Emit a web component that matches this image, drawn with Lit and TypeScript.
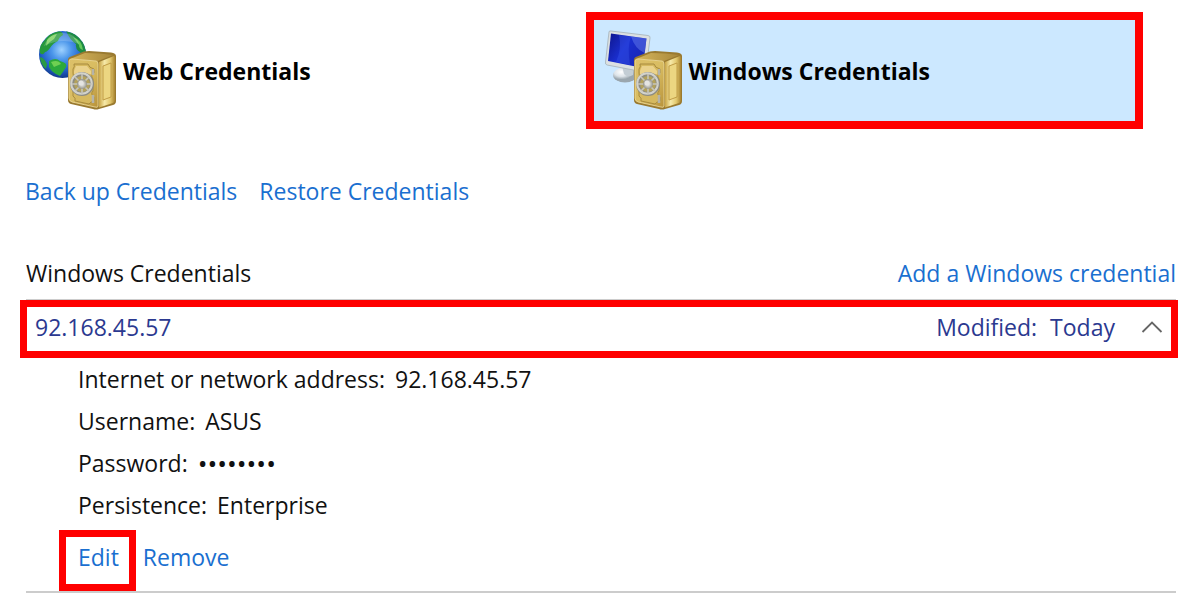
import { LitElement, html, css, svg } from "lit";
import { customElement, state } from "lit/decorators.js";

const safe = svg`
  <defs>
    <linearGradient id="front" x1="0" y1="0" x2="1" y2="1">
      <stop offset="0" stop-color="#dcc069" /><stop offset=".5" stop-color="#d9bd62" /><stop offset="1" stop-color="#b8923a" />
    </linearGradient>
    <linearGradient id="side" x1="0" y1="0" x2="1" y2="0">
      <stop offset="0" stop-color="#c9a545" /><stop offset=".35" stop-color="#f6e9a8" /><stop offset=".7" stop-color="#e3c96f" /><stop offset="1" stop-color="#a98430" />
    </linearGradient>
    <linearGradient id="top" x1="0" y1="0" x2="1" y2="0">
      <stop offset="0" stop-color="#d6b65c" /><stop offset="1" stop-color="#a8873a" />
    </linearGradient>
    <radialGradient id="dial">
      <stop offset="0" stop-color="#f4f4f4" /><stop offset=".5" stop-color="#c9c9c3" /><stop offset="1" stop-color="#94948c" />
    </radialGradient>
  </defs>
  <path d="M29 31 Q29 28 32 27.500L45 22.500Q47 22 50 22L72 23.500Q77 24 77 27V72Q77 75 74 76L60 80Q57 81 54 80L32 75Q29 74 29 71Z" fill="#9a7a30" />
  <path d="M31 30 46 24Q61 24 74 26L59 32Z" fill="url(#top)" />
  <path d="M30 32Q30 30 33 30L57 32Q59 32 59 35V77Q59 79 56 78L33 73Q30 72 30 69Z" fill="url(#front)" stroke="#efdda0" stroke-width=".8" />
  <path d="M60 33 75 27Q76 27 76 29V71Q76 73 74 74L60 78.500Z" fill="url(#side)" />
  <path d="M64 37 72 34V68L64 71Z" fill="#ecd681" stroke="#c09c45" stroke-width="1" />
  <path d="M35 35H49Q50 39 55 40V44Q51 46 54 50V62Q51 65 55 68V72Q51 73 50 75L36 72Q37 69 34 67V61Q36 52 34 44V40Q36 38 35 35Z" fill="#d6b95f" stroke="#a88b3e" stroke-width="1" />
  <path d="M37 37H48L52 42V45H35V42Z" fill="#ead28b" />
  <path d="M54 40v6M54 66v8" stroke="#b5b3a9" stroke-width="2.500" />
  <circle cx="43" cy="55" r="10" fill="#b3a25c" stroke="#8d8c83" stroke-width="4" />
  <circle cx="42.500" cy="54.500" r="10.300" fill="none" stroke="#d2d2cb" stroke-width="2" />
  <path d="M43 45v20M33 55h20M36 48l14 14M50 48 36 62" stroke="#c6c5ba" stroke-width="1.600" />
  <circle cx="43" cy="55" r="5" fill="url(#dial)" />
  <circle cx="42" cy="54" r="2.500" fill="#e5e5e2" />`;

const webIcon = html`<svg class="icon" viewBox="0 0 80 84" aria-hidden="true">
  ${svg`
  <defs>
    <radialGradient id="sea" cx=".48" cy=".4" r=".6">
      <stop offset="0" stop-color="#9fd2ff" /><stop offset=".35" stop-color="#4b96ea" /><stop offset=".75" stop-color="#1f5cc6" /><stop offset="1" stop-color="#123a8c" />
    </radialGradient>
    <clipPath id="globe"><circle cx="23.500" cy="25.500" r="23.500" /></clipPath>
  </defs>
  <circle cx="23.500" cy="25.500" r="23.500" fill="url(#sea)" />
  <g clip-path="url(#globe)">
    <path d="M5 12Q10 4 20 2Q24 3 24 6Q20 8 19 12Q14 14 11 19Q8 23 6 23Q4 27 1 24L0 17Z" fill="#27993c" />
    <path d="M8 11Q12 6 18 5L15 10Q10 13 7 17Z" fill="#79d15a" />
    <path d="M2 28Q6 30 8 35L7 40Q2 36 1 29Z" fill="#2a9a45" />
    <path d="M10 32Q17 28 21 32Q29 34 27 38Q24 43 21 47Q13 44 10 38Z" fill="#2ca93c" />
    <path d="M12 33Q19 30 22 35L15 38Z" fill="#6fd052" />
    <path d="M27 2Q43 5 47 20V30Q43 28 41 23Q36 20 37 15Q31 11 27 2Z" fill="#1e8c43" />
    <path d="M34 8Q43 11 44 21Q40 20 40 16Z" fill="#63c95a" />
  </g>
  <path d="M5 17Q10 3 25 4Q37 5 40 15Q23 8 5 17Z" fill="#ffffff" opacity=".2" />`}
  ${safe}
</svg>`;

const windowsIcon = html`<svg class="icon" viewBox="0 0 80 84" aria-hidden="true">
  ${svg`
  <defs>
    <linearGradient id="screen" x1="0" y1="0" x2="1" y2=".6">
      <stop offset="0" stop-color="#0f158c" /><stop offset=".5" stop-color="#1a2fd0" /><stop offset="1" stop-color="#1a27b5" />
    </linearGradient>
    <radialGradient id="stand" cx=".35" cy=".3">
      <stop offset="0" stop-color="#ffffff" /><stop offset=".6" stop-color="#dce3e8" /><stop offset="1" stop-color="#9aa6ae" />
    </radialGradient>
  </defs>
  <ellipse cx="20" cy="46" rx="12" ry="7.500" fill="url(#stand)" />
  <path d="M17 37H29L28 46Q22 49 19 45Z" fill="#c3cdd4" />
  <path d="M4 3Q4 1.500 6 2L43 6.500Q45.500 7 45 9L41 42Q41 43.500 39 43L2 36Q0 35.500 .5 33Z" fill="#dbe0e2" stroke="#a5b1b8" stroke-width=".8" />
  <path d="M6 4.500 41.500 9.500 38 39 3 32Z" fill="url(#screen)" />
  <path d="M14 6 26 7.500Q22 18 25 36L11 33Q17 20 14 6Z" fill="#3656e8" opacity=".4" />
  <path d="M26 7.500 41.500 9.500 39.500 24Q30 20 26 7.500Z" fill="#6a82ef" opacity=".45" />`}
  ${safe}
</svg>`;

@customElement("app-root")
export class AppRoot extends LitElement {
  @state() private open = true;

  static styles = css`
    :host {
      display: block;
      min-height: 100vh;
      box-sizing: border-box;
      padding: 12px 23px 20px 20px;
      background: #fff;
      color: #111;
      font: 23px/32px "Open Sans", "Noto Sans", sans-serif;
    }
    * { box-sizing: border-box; }
    button {
      margin: 0;
      border: 0;
      background: none;
      color: inherit;
      font: inherit;
      text-align: left;
      cursor: pointer;
    }
    a { color: #1a6fd0; text-decoration: none; }
    .vaults {
      display: grid;
      grid-template-columns: 1fr 1fr;
      gap: 8px;
      padding-right: 35px;
    }
    .vault {
      display: flex;
      align-items: center;
      gap: 4px;
      height: 117px;
      padding: 0 11px;
      border: 8px solid transparent;
      color: #000;
      font-weight: 700;
    }
    .vault.selected { border-color: #f00; background: #cce8ff; background-clip: padding-box; }
    .icon { width: 80px; height: 84px; flex: none; }
    .links { display: flex; gap: 22px; margin: 46px 0 50px; padding-left: 5px; }
    .heading { display: flex; justify-content: space-between; padding: 0 2px 10px 6px; }
    h2 { margin: 0; font: inherit; }
    .rule { margin: 0 2px 0 6px; border-top: 1px solid #ccc; }
    .row {
      display: flex;
      align-items: center;
      width: 100%;
      height: 58px;
      padding: 0 8px 4px;
      border: 7px solid #f00;
      color: #2b3990;
    }
    .address { flex: 1; }
    .modified { display: flex; gap: 13px; }
    .chevron { width: 22px; height: 14px; margin-left: 26px; }
    .body { margin: 0 2px 0 6px; border-bottom: 2px solid #ccc; }
    dl { margin: 0; padding: 0 0 4px 52px; }
    .pair { display: flex; gap: 10px; line-height: 42px; }
    dd { margin: 0; }
    .secret { font-size: 26px; }
    .actions { display: flex; align-items: center; gap: 7px; padding-left: 33px; }
    .edit { padding: 4px 10px 11px 12px; border: 7px solid #f00; }
    .remove { padding-bottom: 7px; }
  `;

  render() {
    return html`
      <nav class="vaults" aria-label="Vaults">
        <button class="vault">${webIcon}<span>Web Credentials</span></button>
        <button class="vault selected" aria-current="true">${windowsIcon}<span>Windows Credentials</span></button>
      </nav>
      <div class="links">
        <a href="#backup">Back up Credentials</a>
        <a href="#restore">Restore Credentials</a>
      </div>
      <section>
        <div class="heading">
          <h2>Windows Credentials</h2>
          <a href="#add">Add a Windows credential</a>
        </div>
        <div class="rule"></div>
        <button class="row" aria-expanded=${this.open} @click=${() => (this.open = !this.open)}>
          <span class="address">92.168.45.57</span>
          <span class="modified"><span>Modified:</span><span>Today</span></span>
          <svg class="chevron" viewBox="0 0 22 14" aria-hidden="true">
            <path d="M1.500 12 11 2.500 20.500 12" fill="none" stroke="#666" stroke-width="1.800" />
          </svg>
        </button>
        ${this.open
          ? html`<div class="body">
              <dl>
                <div class="pair"><dt>Internet or network address:</dt><dd>92.168.45.57</dd></div>
                <div class="pair"><dt>Username:</dt><dd>ASUS</dd></div>
                <div class="pair"><dt>Password:</dt><dd class="secret">••••••••</dd></div>
                <div class="pair"><dt>Persistence:</dt><dd>Enterprise</dd></div>
              </dl>
              <div class="actions">
                <a class="edit" href="#edit">Edit</a>
                <a class="remove" href="#remove">Remove</a>
              </div>
            </div>`
          : null}
      </section>
    `;
  }
}
